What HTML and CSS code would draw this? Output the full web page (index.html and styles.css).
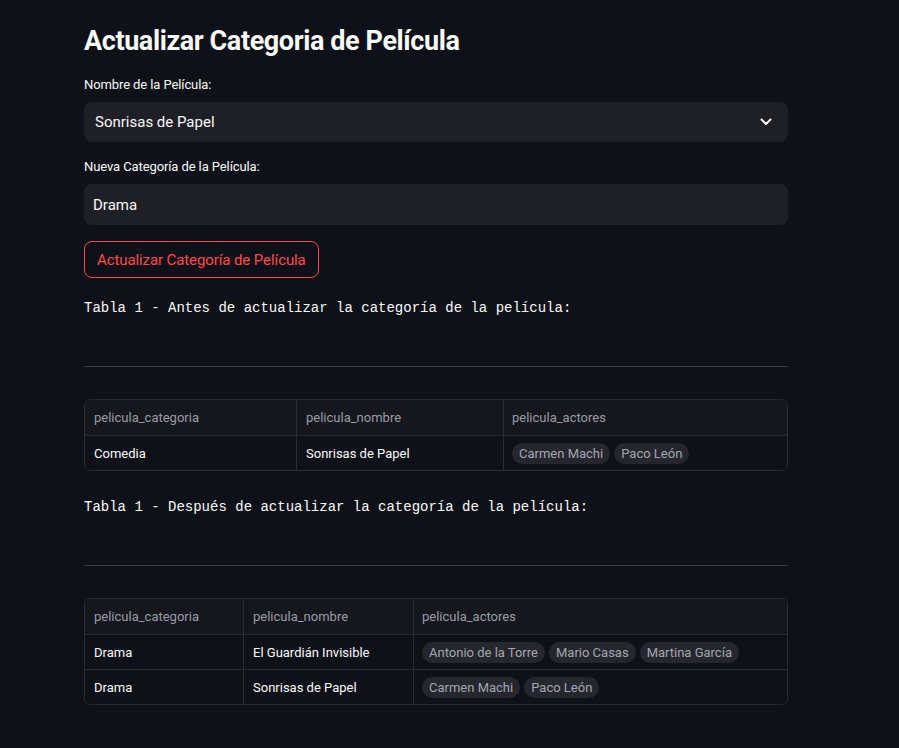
FILE: index.html
```html
<!DOCTYPE html>
<html lang="es">
<head>
<meta charset="utf-8">
<title>Actualizar Categoria de Película</title>
<link rel="stylesheet" href="styles.css">
</head>
<body>
<main class="main">
  <h1 class="title">Actualizar Categoria de Película</h1>

  <div class="field">
    <label class="label">Nombre de la Película:</label>
    <div class="select">
      <span>Sonrisas de Papel</span>
      <svg class="chev" width="12" height="8" viewBox="0 0 12 8"><path d="M1.5 1.5 L6 6 L10.5 1.5" fill="none" stroke="#fafafa" stroke-width="2" stroke-linecap="round" stroke-linejoin="round"/></svg>
    </div>
  </div>

  <div class="field">
    <label class="label">Nueva Categoría de la Película:</label>
    <div class="input">Drama</div>
  </div>

  <button class="btn">Actualizar Categoría de Película</button>

  <pre class="mono">Tabla 1 - Antes de actualizar la categoría de la película:</pre>
  <hr class="rule">

  <div class="table t1">
    <div class="row head">
      <div class="cell">pelicula_categoria</div>
      <div class="cell">pelicula_nombre</div>
      <div class="cell">pelicula_actores</div>
    </div>
    <div class="row">
      <div class="cell">Comedia</div>
      <div class="cell">Sonrisas de Papel</div>
      <div class="cell"><span class="pill">Carmen Machi</span><span class="pill">Paco León</span></div>
    </div>
  </div>

  <pre class="mono">Tabla 1 - Después de actualizar la categoría de la película:</pre>
  <hr class="rule">

  <div class="table t2">
    <div class="row head">
      <div class="cell">pelicula_categoria</div>
      <div class="cell">pelicula_nombre</div>
      <div class="cell">pelicula_actores</div>
    </div>
    <div class="row">
      <div class="cell">Drama</div>
      <div class="cell">El Guardián Invisible</div>
      <div class="cell"><span class="pill">Antonio de la Torre</span><span class="pill">Mario Casas</span><span class="pill">Martina García</span></div>
    </div>
    <div class="row">
      <div class="cell">Drama</div>
      <div class="cell">Sonrisas de Papel</div>
      <div class="cell"><span class="pill">Carmen Machi</span><span class="pill">Paco León</span></div>
    </div>
  </div>
</main>
</body>
</html>
```

FILE: styles.css
```css
* { box-sizing: border-box; }
html, body { margin: 0; padding: 0; }
body {
  background: #0e1117;
  color: #fafafa;
  font-family: "Roboto", "Noto Sans", sans-serif;
  height: 748px;
  overflow: hidden;
}
.main {
  width: 704px;
  margin-left: 84px;
  padding-top: 24px;
  display: flex;
  flex-direction: column;
}
.title {
  margin: 0;
  font-size: 27px;
  font-weight: 700;
  line-height: 34px;
  letter-spacing: -0.4px;
}
.field { display: flex; flex-direction: column; margin-top: 18px; }
.field + .field { margin-top: 16px; }
.label {
  font-size: 13px;
  line-height: 18px;
  margin-bottom: 8px;
  color: #fafafa;
  letter-spacing: -0.1px;
}
.select, .input {
  height: 40px;
  background: #1f2026;
  border-radius: 8px;
  display: flex;
  align-items: center;
  font-size: 15px;
}
.select { padding: 0 16px 0 11px; justify-content: space-between; }
.input { padding: 0 9px; height: 41px; }
.chev { display: block; }
.btn {
  align-self: flex-start;
  margin-top: 16px;
  height: 37px;
  width: 235px;
  background: transparent;
  border: 1px solid #ff4b4b;
  border-radius: 8px;
  color: #ff4b4b;
  font-family: inherit;
  font-size: 15px;
  letter-spacing: -0.1px;
  white-space: nowrap;
  padding: 0 12px;
  text-align: left;
}
.mono {
  margin: 20px 0 0 0;
  font-family: "Liberation Mono", "DejaVu Sans Mono", monospace;
  font-size: 14px;
  line-height: 20px;
  color: #fafafa;
}
.rule {
  margin: 48px 0 0 0;
  border: none;
  border-top: 1px solid #3d3f47;
  height: 0;
}
.table {
  margin-top: 32px;
  border: 1px solid #292b33;
  border-radius: 6px;
  overflow: hidden;
  font-size: 13px;
}
.row { display: grid; height: 35px; border-top: 1px solid #292b33; }
.row.head { border-top: none; background: #15171d; color: #9a9ca5; height: 35px; }
.row:not(.head) { background: #0e1117; }
.t1 .row { grid-template-columns: 211px 207px 1fr; }
.t2 .row { grid-template-columns: 158px 170px 1fr; }
.cell {
  display: flex;
  align-items: center;
  padding: 0 9px;
  border-left: 1px solid #292b33;
  gap: 4px;
  white-space: nowrap;
}
.cell:first-child { border-left: none; }
.cell:last-child { padding-left: 8px; }
.pill {
  background: #26272e;
  color: #a3a6b0;
  border-radius: 11px;
  padding: 0 7px;
  height: 21px;
  line-height: 21px;
  font-size: 13px;
}
.t1 + .mono { margin-top: 26px; }
```
